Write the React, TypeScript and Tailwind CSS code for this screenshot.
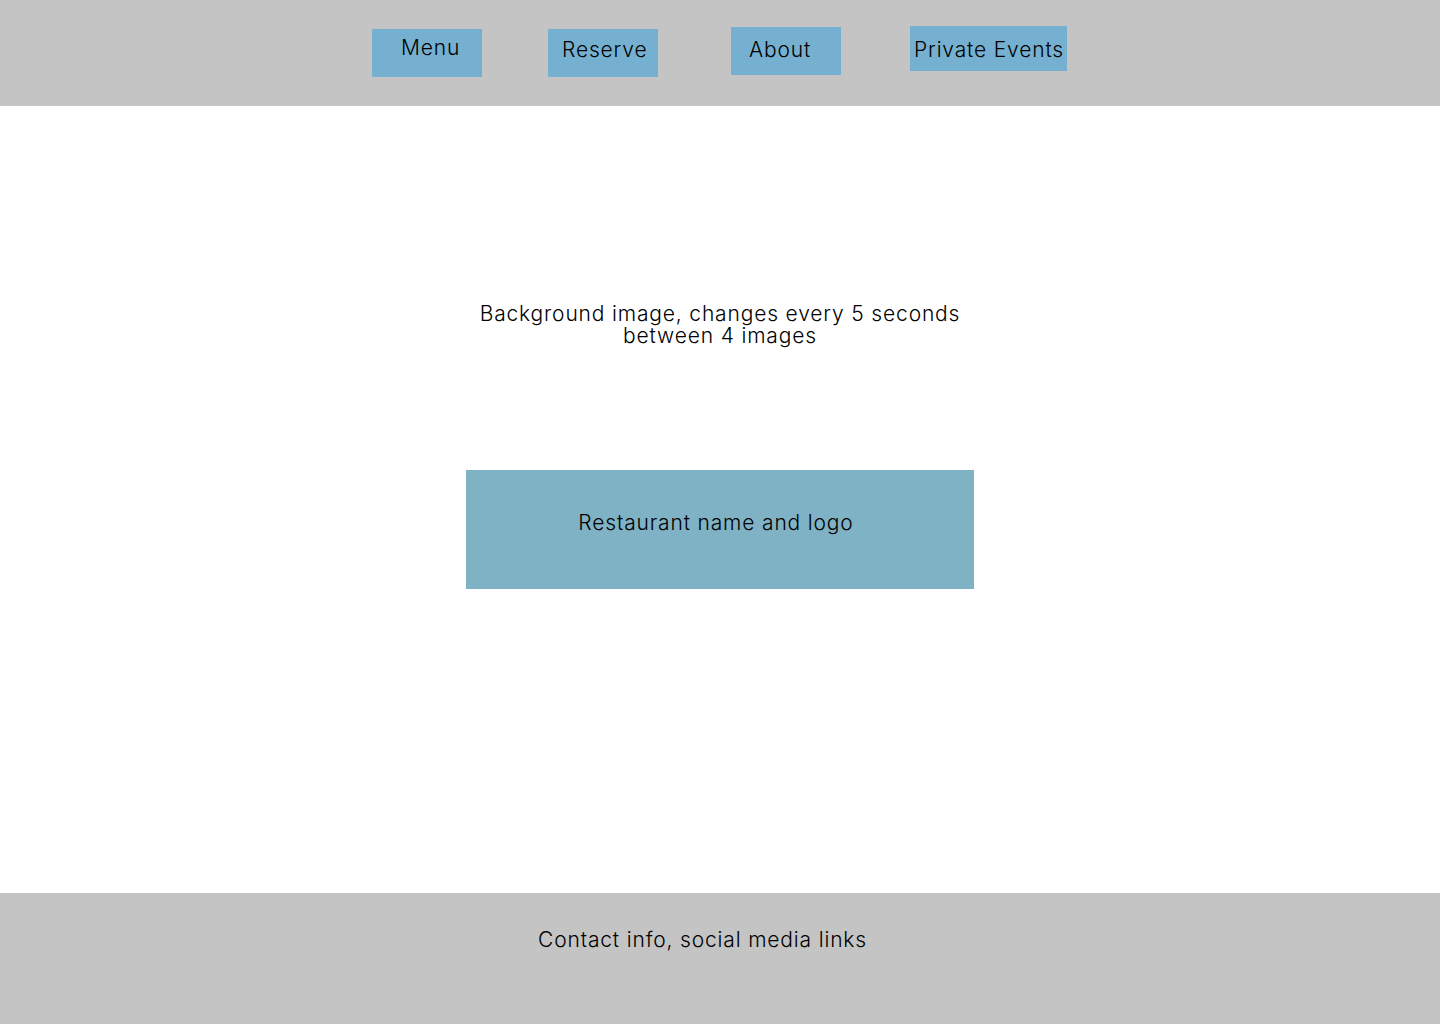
import React from "react";

const font = { fontFamily: '"Inter", "Lato", sans-serif' };

export default function App() {
  return (
    <div className="flex h-[1024px] w-[1440px] flex-col bg-white text-[21px] font-[350] text-black" style={font}>
      <header className="flex h-[106px] shrink-0 items-start bg-[#c4c4c4] pl-[372px]">
        <div className="mt-[29px] flex h-[48px] w-[110px] items-start justify-start bg-[#76b0d1] pl-[29px] pt-[6px] leading-[26px] tracking-[0.04em]">Menu</div>
        <div className="ml-[66px] mt-[29px] flex h-[48px] w-[110px] items-start justify-start bg-[#76b0d1] pl-[14px] pt-[8px] leading-[26px] tracking-[0.04em]">Reserve</div>
        <div className="ml-[73px] mt-[27px] flex h-[48px] w-[110px] items-start justify-start bg-[#76b0d1] pl-[18px] pt-[10px] leading-[26px] tracking-[0.04em]">About</div>
        <div className="ml-[69px] mt-[26px] flex h-[45px] w-[157px] items-start justify-start bg-[#76b0d1] pl-[4px] pt-[11px] leading-[26px] tracking-[0.04em]">Private Events</div>
      </header>
      <main className="flex flex-1 flex-col items-center">
        <p className="mt-[197px] text-center leading-[22px] tracking-[0.04em]">
          Background image, changes every 5 seconds
          <br />
          between 4 images
        </p>
        <div className="mt-[123px] flex h-[119px] w-[508px] justify-center bg-[#7fb2c5] pt-[40px] pr-[8px]">
          <span className="leading-[26px] tracking-[0.04em]">Restaurant name and logo</span>
        </div>
      </main>
      <footer className="flex h-[131px] shrink-0 justify-center bg-[#c4c4c4] pr-[35px] pt-[34px]">
        <span className="leading-[26px] tracking-[0.04em]">Contact info, social media links</span>
      </footer>
    </div>
  );
}
